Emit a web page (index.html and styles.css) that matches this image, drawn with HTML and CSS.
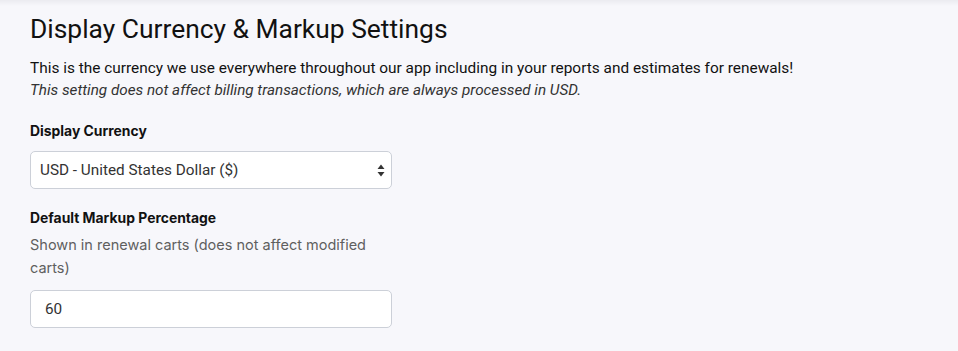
FILE: index.html
```html
<!DOCTYPE html>
<html>
<head>
<meta charset="utf-8">
<link rel="stylesheet" href="styles.css">
</head>
<body>
<div class="topshade"></div>
<main class="page">
  <h1 class="title">Display Currency &amp; Markup Settings</h1>
  <p class="intro">This is the currency we use everywhere throughout our app including in your reports and estimates for renewals!</p>
  <p class="note">This setting does not affect billing transactions, which are always processed in USD.</p>

  <div class="field">
    <label class="label">Display Currency</label>
    <div class="select">
      <span>USD - United States Dollar ($)</span>
      <svg class="arrows" width="8" height="13" viewBox="0 0 8 13"><path d="M4 0.5 L7.5 5 H0.5 Z M4 12.5 L7.5 8 H0.5 Z" fill="#333"/></svg>
    </div>
  </div>

  <div class="field">
    <label class="label">Default Markup Percentage</label>
    <p class="help">Shown in renewal carts (does not affect modified carts)</p>
    <div class="input">60</div>
  </div>
</main>
</body>
</html>
```

FILE: styles.css
```css
html, body {
  margin: 0;
  padding: 0;
  background: #f7f7fb;
}
body {
  font-family: Roboto, "Liberation Sans", sans-serif;
  color: #1a1a1a;
  width: 958px;
  height: 351px;
  overflow: hidden;
  position: relative;
}
.topshade {
  position: absolute;
  left: 0;
  top: 0;
  width: 100%;
  height: 6px;
  background: linear-gradient(#ebebf0, rgba(247,247,251,0));
}
.page {
  padding: 12px 30px 0 30px;
}
.title {
  margin: 0;
  font-size: 26.4px;
  font-weight: 400;
  line-height: 34px;
  color: #111;
}
.intro {
  margin: 11px 0 0 0;
  font-size: 15.4px;
  line-height: 22px;
  color: #111;
}
.note {
  margin: 0;
  font-size: 15.25px;
  line-height: 22px;
  font-style: italic;
  color: #333;
}
.field {
  width: 362px;
}
.label {
  display: block;
  font-family: Inter, Roboto, sans-serif;
  font-weight: 700;
  font-size: 13.9px;
  line-height: 22px;
  color: #111;
  margin-top: 19px;
}
.select, .input {
  box-sizing: border-box;
  height: 38px;
  background: #fff;
  border: 1px solid #ccd0d8;
  border-radius: 5px;
  display: flex;
  align-items: center;
  font-size: 15.3px;
  color: #333;
}
.select {
  margin-top: 9px;
  padding: 0 6px 0 9px;
  justify-content: space-between;
}
.arrows {
  display: block;
}
.field + .field .label {
  margin-top: 18px;
}
.help {
  margin: 4px 0 0 0;
  font-family: Inter, Roboto, sans-serif;
  font-size: 14.5px;
  line-height: 23px;
  color: #5f5f5f;
}
.input {
  margin-top: 11px;
  padding: 0 14px;
}
```
